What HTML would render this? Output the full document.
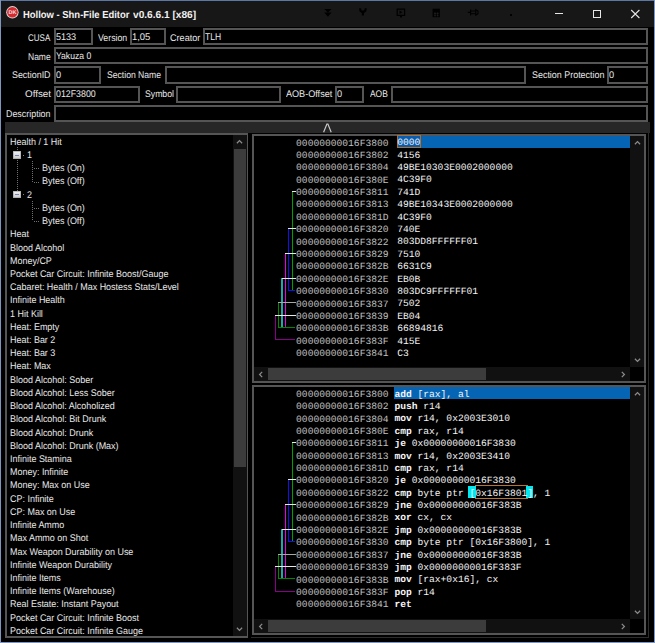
<!DOCTYPE html><html><head><meta charset="utf-8"><style>html,body{margin:0;padding:0;background:#000;text-rendering:geometricPrecision;width:655px;height:643px;overflow:hidden;position:relative}div{box-sizing:content-box}</style></head><body>
<div style="position:absolute;left:0px;top:0px;width:655.00px;height:1.00px;background:#5b77a6;"></div>
<div style="position:absolute;left:0px;top:0px;width:1.20px;height:643.00px;background:#7d96c0;"></div>
<div style="position:absolute;left:653.6px;top:0px;width:1.40px;height:643.00px;background:#7d96c0;"></div>
<div style="position:absolute;left:0px;top:641.6px;width:655.00px;height:1.40px;background:#7d96c0;"></div>
<div style="position:absolute;left:1.2px;top:1px;width:652.40px;height:25.70px;background:#171717;"></div>
<svg style="position:absolute;left:5px;top:5px" width="15" height="15" viewBox="0 0 15 15"><circle cx="7.4" cy="7.3" r="6.2" fill="#d8d8d8"/><circle cx="7.4" cy="7.3" r="5.3" fill="#d42a30"/><text x="7.4" y="9.4" font-family="Liberation Sans" font-size="5.5" font-weight="700" fill="#f4dede" text-anchor="middle">DK</text></svg>
<div style="position:absolute;left:22.91px;top:10.17px;font:700 10.2px/11.73px 'Liberation Sans', sans-serif;color:#f2f2f2;white-space:pre;transform:scaleX(0.9263);transform-origin:0 0;">Hollow - Shn-File Editor</div>
<div style="position:absolute;left:133.20px;top:10.17px;font:700 10.2px/11.73px 'Liberation Sans', sans-serif;color:#f2f2f2;white-space:pre;transform:scaleX(0.9952);transform-origin:0 0;">v0.6.6.1 [x86]</div>
<svg style="position:absolute;left:323px;top:8px" width="10" height="10" viewBox="0 0 10 10"><path d="M1.2 1 L8.6 1 L4.9 4.4 Z M1.2 4.6 L8.6 4.6 L4.9 8.8 Z" fill="#000"/></svg>
<svg style="position:absolute;left:358px;top:7px" width="10" height="10" viewBox="0 0 10 10"><path d="M1 1.2 L3 1.2 L3.6 3.4 L6.2 3.4 L6.8 1.2 L8.8 1.2 L8.2 4.6 L6 6 L6 8.6 L3.8 8.6 L3.8 6 L1.6 4.6 Z" fill="#000"/></svg>
<svg style="position:absolute;left:396px;top:7.5px" width="10" height="11" viewBox="0 0 10 11"><path d="M1.2 1.2 H8.6 V7.4 H1.2 Z" stroke="#000" stroke-width="1.2" fill="none"/><path d="M3.5 2.6 L6.4 4.3 L3.5 6 Z M4 8 H6 V9.6 H4 Z" fill="#000"/></svg>
<svg style="position:absolute;left:432px;top:7.5px" width="9" height="10" viewBox="0 0 9 10"><path d="M0.6 0.7 H7.9 V9.2 H0.6 Z" fill="#000"/><circle cx="3" cy="5.6" r="1.1" fill="#1c1c1c"/><circle cx="5.6" cy="5.6" r="1.1" fill="#1c1c1c"/><circle cx="3" cy="7.6" r="0.9" fill="#1c1c1c"/><circle cx="5.6" cy="7.6" r="0.9" fill="#1c1c1c"/></svg>
<svg style="position:absolute;left:467px;top:8px" width="12" height="9" viewBox="0 0 12 9"><path d="M0.8 4.4 H3.2 M3.6 1.4 V7.4 M3.6 3 H8.8 V5.8 H3.6 M8.8 1.6 L11 3 V5.8 L8.8 7.2 Z" stroke="#000" stroke-width="1.1" fill="none"/></svg>
<div style="position:absolute;left:510.2px;top:13.9px;width:1.80px;height:1.70px;background:#000;"></div>
<div style="position:absolute;left:554.8px;top:12.7px;width:8.60px;height:1.00px;background:#e6e6e6;"></div>
<div style="position:absolute;left:593.2px;top:9.5px;width:6.2px;height:6.1px;border:1px solid #e6e6e6"></div>
<svg style="position:absolute;left:630px;top:8.5px" width="11" height="10" viewBox="0 0 11 10"><path d="M1.2 1 L9.4 9 M9.4 1 L1.2 9" stroke="#e6e6e6" stroke-width="1.1"/></svg>
<div style="position:absolute;left:54px;top:28px;width:35.00px;height:13.20px;border:2px solid #555555;background:#000"></div>
<div style="position:absolute;left:130.3px;top:28px;width:31.70px;height:13.20px;border:2px solid #555555;background:#000"></div>
<div style="position:absolute;left:203.2px;top:28px;width:440.80px;height:13.20px;border:2px solid #555555;background:#000"></div>
<div style="position:absolute;left:54px;top:47.2px;width:590.00px;height:13.20px;border:2px solid #555555;background:#000"></div>
<div style="position:absolute;left:54px;top:66.4px;width:43.30px;height:13.20px;border:2px solid #555555;background:#000"></div>
<div style="position:absolute;left:164.6px;top:66.4px;width:357.40px;height:13.20px;border:2px solid #555555;background:#000"></div>
<div style="position:absolute;left:606.5px;top:66.4px;width:37.50px;height:13.20px;border:2px solid #555555;background:#000"></div>
<div style="position:absolute;left:54px;top:85.6px;width:82.00px;height:13.20px;border:2px solid #555555;background:#000"></div>
<div style="position:absolute;left:176.3px;top:85.6px;width:100.70px;height:13.20px;border:2px solid #555555;background:#000"></div>
<div style="position:absolute;left:335.3px;top:85.6px;width:24.70px;height:13.20px;border:2px solid #555555;background:#000"></div>
<div style="position:absolute;left:390.8px;top:85.6px;width:253.20px;height:13.20px;border:2px solid #555555;background:#000"></div>
<div style="position:absolute;left:54px;top:104.8px;width:590.00px;height:13.20px;border:2px solid #555555;background:#000"></div>
<div style="position:absolute;left:28.49px;top:32.52px;font:400 9.7px/11.15px 'Liberation Sans', sans-serif;color:#e8e8e8;white-space:pre;transform:scaleX(0.8264);transform-origin:0 0;">CUSA</div>
<div style="position:absolute;left:97.80px;top:32.52px;font:400 9.7px/11.15px 'Liberation Sans', sans-serif;color:#e8e8e8;white-space:pre;transform:scaleX(0.9039);transform-origin:0 0;">Version</div>
<div style="position:absolute;left:169.53px;top:32.52px;font:400 9.7px/11.15px 'Liberation Sans', sans-serif;color:#e8e8e8;white-space:pre;transform:scaleX(0.9386);transform-origin:0 0;">Creator</div>
<div style="position:absolute;left:28.14px;top:51.62px;font:400 9.7px/11.15px 'Liberation Sans', sans-serif;color:#e8e8e8;white-space:pre;transform:scaleX(0.8768);transform-origin:0 0;">Name</div>
<div style="position:absolute;left:12.34px;top:70.12px;font:400 9.7px/11.15px 'Liberation Sans', sans-serif;color:#e8e8e8;white-space:pre;transform:scaleX(0.9171);transform-origin:0 0;">SectionID</div>
<div style="position:absolute;left:107.16px;top:70.12px;font:400 9.7px/11.15px 'Liberation Sans', sans-serif;color:#e8e8e8;white-space:pre;transform:scaleX(0.8883);transform-origin:0 0;">Section Name</div>
<div style="position:absolute;left:531.54px;top:70.12px;font:400 9.7px/11.15px 'Liberation Sans', sans-serif;color:#e8e8e8;white-space:pre;transform:scaleX(0.9213);transform-origin:0 0;">Section Protection</div>
<div style="position:absolute;left:24.69px;top:89.42px;font:400 9.7px/11.15px 'Liberation Sans', sans-serif;color:#e8e8e8;white-space:pre;transform:scaleX(1.0139);transform-origin:0 0;">Offset</div>
<div style="position:absolute;left:144.55px;top:89.42px;font:400 9.7px/11.15px 'Liberation Sans', sans-serif;color:#e8e8e8;white-space:pre;transform:scaleX(0.8960);transform-origin:0 0;">Symbol</div>
<div style="position:absolute;left:286.40px;top:89.42px;font:400 9.7px/11.15px 'Liberation Sans', sans-serif;color:#e8e8e8;white-space:pre;transform:scaleX(0.9374);transform-origin:0 0;">AOB-Offset</div>
<div style="position:absolute;left:370.40px;top:89.42px;font:400 9.7px/11.15px 'Liberation Sans', sans-serif;color:#e8e8e8;white-space:pre;transform:scaleX(0.8700);transform-origin:0 0;">AOB</div>
<div style="position:absolute;left:6.31px;top:108.62px;font:400 9.7px/11.15px 'Liberation Sans', sans-serif;color:#e8e8e8;white-space:pre;transform:scaleX(0.9185);transform-origin:0 0;">Description</div>
<div style="position:absolute;left:56.07px;top:32.22px;font:400 9.7px/11.15px 'Liberation Sans', sans-serif;color:#e8e8e8;white-space:pre;transform:scaleX(0.9333);transform-origin:0 0;">5133</div>
<div style="position:absolute;left:132.17px;top:32.22px;font:400 9.7px/11.15px 'Liberation Sans', sans-serif;color:#e8e8e8;white-space:pre;transform:scaleX(0.9746);transform-origin:0 0;">1,05</div>
<div style="position:absolute;left:204.98px;top:32.22px;font:400 9.7px/11.15px 'Liberation Sans', sans-serif;color:#e8e8e8;white-space:pre;transform:scaleX(0.8812);transform-origin:0 0;">TLH</div>
<div style="position:absolute;left:55.78px;top:51.32px;font:400 9.7px/11.15px 'Liberation Sans', sans-serif;color:#e8e8e8;white-space:pre;transform:scaleX(0.8866);transform-origin:0 0;">Yakuza 0</div>
<div style="position:absolute;left:55.76px;top:69.82px;font:400 9.7px/11.15px 'Liberation Sans', sans-serif;color:#e8e8e8;white-space:pre;transform:scaleX(0.9474);transform-origin:0 0;">0</div>
<div style="position:absolute;left:55.77px;top:89.12px;font:400 9.7px/11.15px 'Liberation Sans', sans-serif;color:#e8e8e8;white-space:pre;transform:scaleX(0.9093);transform-origin:0 0;">012F3800</div>
<div style="position:absolute;left:608.50px;top:69.82px;font:400 9.7px/11.15px 'Liberation Sans', sans-serif;color:#e8e8e8;white-space:pre;transform:scaleX(0.9474);transform-origin:0 0;">0</div>
<div style="position:absolute;left:337.30px;top:89.12px;font:400 9.7px/11.15px 'Liberation Sans', sans-serif;color:#e8e8e8;white-space:pre;transform:scaleX(0.9474);transform-origin:0 0;">0</div>
<div style="position:absolute;left:5.1px;top:121.7px;width:645.20px;height:11.10px;background:#272727;"></div>
<svg style="position:absolute;left:322px;top:122.5px" width="11" height="10" viewBox="0 0 11 10"><path d="M1.6 9.3 L4.9 1 L5.9 1 L9.2 9.3" stroke="#c8c8c8" stroke-width="1.2" fill="none"/></svg>
<div style="position:absolute;left:5.1px;top:132.8px;width:239.40px;height:501.00px;border:2.1px solid #555555;background:#000"></div>
<div style="position:absolute;left:233.1px;top:134.9px;width:13.50px;height:501.00px;background:#111;"></div>
<div style="position:absolute;left:233.7px;top:149px;width:12.20px;height:317.70px;background:#3c3c3c;"></div>
<div style="position:absolute;left:10.10px;top:136.82px;font:400 9.7px/11.15px 'Liberation Sans', sans-serif;color:#e8e8e8;white-space:pre;transform:scaleX(0.9250);transform-origin:0 0;">Health / 1 Hit</div>
<div style="position:absolute;left:27.40px;top:150.04px;font:400 9.7px/11.15px 'Liberation Sans', sans-serif;color:#e8e8e8;white-space:pre;transform:scaleX(0.9250);transform-origin:0 0;">1</div>
<div style="position:absolute;left:41.60px;top:163.25px;font:400 9.7px/11.15px 'Liberation Sans', sans-serif;color:#e8e8e8;white-space:pre;transform:scaleX(0.9250);transform-origin:0 0;">Bytes (On)</div>
<div style="position:absolute;left:41.60px;top:176.47px;font:400 9.7px/11.15px 'Liberation Sans', sans-serif;color:#e8e8e8;white-space:pre;transform:scaleX(0.9250);transform-origin:0 0;">Bytes (Off)</div>
<div style="position:absolute;left:27.40px;top:189.69px;font:400 9.7px/11.15px 'Liberation Sans', sans-serif;color:#e8e8e8;white-space:pre;transform:scaleX(0.9250);transform-origin:0 0;">2</div>
<div style="position:absolute;left:41.60px;top:202.90px;font:400 9.7px/11.15px 'Liberation Sans', sans-serif;color:#e8e8e8;white-space:pre;transform:scaleX(0.9250);transform-origin:0 0;">Bytes (On)</div>
<div style="position:absolute;left:41.60px;top:216.12px;font:400 9.7px/11.15px 'Liberation Sans', sans-serif;color:#e8e8e8;white-space:pre;transform:scaleX(0.9250);transform-origin:0 0;">Bytes (Off)</div>
<div style="position:absolute;left:10.10px;top:229.33px;font:400 9.7px/11.15px 'Liberation Sans', sans-serif;color:#e8e8e8;white-space:pre;transform:scaleX(0.9250);transform-origin:0 0;">Heat</div>
<div style="position:absolute;left:10.10px;top:242.55px;font:400 9.7px/11.15px 'Liberation Sans', sans-serif;color:#e8e8e8;white-space:pre;transform:scaleX(0.9250);transform-origin:0 0;">Blood Alcohol</div>
<div style="position:absolute;left:10.10px;top:255.77px;font:400 9.7px/11.15px 'Liberation Sans', sans-serif;color:#e8e8e8;white-space:pre;transform:scaleX(0.9250);transform-origin:0 0;">Money/CP</div>
<div style="position:absolute;left:10.10px;top:268.98px;font:400 9.7px/11.15px 'Liberation Sans', sans-serif;color:#e8e8e8;white-space:pre;transform:scaleX(0.9250);transform-origin:0 0;">Pocket Car Circuit: Infinite Boost/Gauge</div>
<div style="position:absolute;left:10.10px;top:282.20px;font:400 9.7px/11.15px 'Liberation Sans', sans-serif;color:#e8e8e8;white-space:pre;transform:scaleX(0.9250);transform-origin:0 0;">Cabaret: Health / Max Hostess Stats/Level</div>
<div style="position:absolute;left:10.10px;top:295.41px;font:400 9.7px/11.15px 'Liberation Sans', sans-serif;color:#e8e8e8;white-space:pre;transform:scaleX(0.9250);transform-origin:0 0;">Infinite Health</div>
<div style="position:absolute;left:10.10px;top:308.63px;font:400 9.7px/11.15px 'Liberation Sans', sans-serif;color:#e8e8e8;white-space:pre;transform:scaleX(0.9250);transform-origin:0 0;">1 Hit Kill</div>
<div style="position:absolute;left:10.10px;top:321.85px;font:400 9.7px/11.15px 'Liberation Sans', sans-serif;color:#e8e8e8;white-space:pre;transform:scaleX(0.9250);transform-origin:0 0;">Heat: Empty</div>
<div style="position:absolute;left:10.10px;top:335.06px;font:400 9.7px/11.15px 'Liberation Sans', sans-serif;color:#e8e8e8;white-space:pre;transform:scaleX(0.9250);transform-origin:0 0;">Heat: Bar 2</div>
<div style="position:absolute;left:10.10px;top:348.28px;font:400 9.7px/11.15px 'Liberation Sans', sans-serif;color:#e8e8e8;white-space:pre;transform:scaleX(0.9250);transform-origin:0 0;">Heat: Bar 3</div>
<div style="position:absolute;left:10.10px;top:361.49px;font:400 9.7px/11.15px 'Liberation Sans', sans-serif;color:#e8e8e8;white-space:pre;transform:scaleX(0.9250);transform-origin:0 0;">Heat: Max</div>
<div style="position:absolute;left:10.10px;top:374.71px;font:400 9.7px/11.15px 'Liberation Sans', sans-serif;color:#e8e8e8;white-space:pre;transform:scaleX(0.9250);transform-origin:0 0;">Blood Alcohol: Sober</div>
<div style="position:absolute;left:10.10px;top:387.93px;font:400 9.7px/11.15px 'Liberation Sans', sans-serif;color:#e8e8e8;white-space:pre;transform:scaleX(0.9250);transform-origin:0 0;">Blood Alcohol: Less Sober</div>
<div style="position:absolute;left:10.10px;top:401.14px;font:400 9.7px/11.15px 'Liberation Sans', sans-serif;color:#e8e8e8;white-space:pre;transform:scaleX(0.9250);transform-origin:0 0;">Blood Alcohol: Alcoholized</div>
<div style="position:absolute;left:10.10px;top:414.36px;font:400 9.7px/11.15px 'Liberation Sans', sans-serif;color:#e8e8e8;white-space:pre;transform:scaleX(0.9250);transform-origin:0 0;">Blood Alcohol: Bit Drunk</div>
<div style="position:absolute;left:10.10px;top:427.57px;font:400 9.7px/11.15px 'Liberation Sans', sans-serif;color:#e8e8e8;white-space:pre;transform:scaleX(0.9250);transform-origin:0 0;">Blood Alcohol: Drunk</div>
<div style="position:absolute;left:10.10px;top:440.79px;font:400 9.7px/11.15px 'Liberation Sans', sans-serif;color:#e8e8e8;white-space:pre;transform:scaleX(0.9250);transform-origin:0 0;">Blood Alcohol: Drunk (Max)</div>
<div style="position:absolute;left:10.10px;top:454.01px;font:400 9.7px/11.15px 'Liberation Sans', sans-serif;color:#e8e8e8;white-space:pre;transform:scaleX(0.9250);transform-origin:0 0;">Infinite Stamina</div>
<div style="position:absolute;left:10.10px;top:467.22px;font:400 9.7px/11.15px 'Liberation Sans', sans-serif;color:#e8e8e8;white-space:pre;transform:scaleX(0.9250);transform-origin:0 0;">Money: Infinite</div>
<div style="position:absolute;left:10.10px;top:480.44px;font:400 9.7px/11.15px 'Liberation Sans', sans-serif;color:#e8e8e8;white-space:pre;transform:scaleX(0.9250);transform-origin:0 0;">Money: Max on Use</div>
<div style="position:absolute;left:10.10px;top:493.65px;font:400 9.7px/11.15px 'Liberation Sans', sans-serif;color:#e8e8e8;white-space:pre;transform:scaleX(0.9250);transform-origin:0 0;">CP: Infinite</div>
<div style="position:absolute;left:10.10px;top:506.87px;font:400 9.7px/11.15px 'Liberation Sans', sans-serif;color:#e8e8e8;white-space:pre;transform:scaleX(0.9250);transform-origin:0 0;">CP: Max on Use</div>
<div style="position:absolute;left:10.10px;top:520.09px;font:400 9.7px/11.15px 'Liberation Sans', sans-serif;color:#e8e8e8;white-space:pre;transform:scaleX(0.9250);transform-origin:0 0;">Infinite Ammo</div>
<div style="position:absolute;left:10.10px;top:533.30px;font:400 9.7px/11.15px 'Liberation Sans', sans-serif;color:#e8e8e8;white-space:pre;transform:scaleX(0.9250);transform-origin:0 0;">Max Ammo on Shot</div>
<div style="position:absolute;left:10.10px;top:546.52px;font:400 9.7px/11.15px 'Liberation Sans', sans-serif;color:#e8e8e8;white-space:pre;transform:scaleX(0.9250);transform-origin:0 0;">Max Weapon Durability on Use</div>
<div style="position:absolute;left:10.10px;top:559.73px;font:400 9.7px/11.15px 'Liberation Sans', sans-serif;color:#e8e8e8;white-space:pre;transform:scaleX(0.9250);transform-origin:0 0;">Infinite Weapon Durability</div>
<div style="position:absolute;left:10.10px;top:572.95px;font:400 9.7px/11.15px 'Liberation Sans', sans-serif;color:#e8e8e8;white-space:pre;transform:scaleX(0.9250);transform-origin:0 0;">Infinite Items</div>
<div style="position:absolute;left:10.10px;top:586.17px;font:400 9.7px/11.15px 'Liberation Sans', sans-serif;color:#e8e8e8;white-space:pre;transform:scaleX(0.9250);transform-origin:0 0;">Infinite Items (Warehouse)</div>
<div style="position:absolute;left:10.10px;top:599.38px;font:400 9.7px/11.15px 'Liberation Sans', sans-serif;color:#e8e8e8;white-space:pre;transform:scaleX(0.9250);transform-origin:0 0;">Real Estate: Instant Payout</div>
<div style="position:absolute;left:10.10px;top:612.60px;font:400 9.7px/11.15px 'Liberation Sans', sans-serif;color:#e8e8e8;white-space:pre;transform:scaleX(0.9250);transform-origin:0 0;">Pocket Car Circuit: Infinite Boost</div>
<div style="position:absolute;left:10.10px;top:625.81px;font:400 9.7px/11.15px 'Liberation Sans', sans-serif;color:#e8e8e8;white-space:pre;transform:scaleX(0.9250);transform-origin:0 0;">Pocket Car Circuit: Infinite Gauge</div>
<div style="position:absolute;left:17px;top:146px;width:1px;height:5.2px;background:repeating-linear-gradient(#000 0 1px,#707070 1px 2px)"></div>
<div style="position:absolute;left:17px;top:159.2px;width:1px;height:31.4px;background:repeating-linear-gradient(#000 0 1px,#707070 1px 2px)"></div>
<div style="position:absolute;left:22.5px;top:154.7px;width:1.00px;height:1.00px;background:#808080;"></div>
<div style="position:absolute;left:22.5px;top:194.1px;width:1.00px;height:1.00px;background:#808080;"></div>
<div style="position:absolute;left:32px;top:160.2px;width:1px;height:21.9px;background:repeating-linear-gradient(#000 0 1px,#707070 1px 2px)"></div>
<div style="position:absolute;left:34px;top:168.416px;width:6.0px;height:1px;background:repeating-linear-gradient(90deg,#707070 0 1px,#000 1px 2px)"></div>
<div style="position:absolute;left:34px;top:181.63199999999998px;width:6.0px;height:1px;background:repeating-linear-gradient(90deg,#707070 0 1px,#000 1px 2px)"></div>
<div style="position:absolute;left:32px;top:199.6px;width:1px;height:21.9px;background:repeating-linear-gradient(#000 0 1px,#707070 1px 2px)"></div>
<div style="position:absolute;left:34px;top:207.816px;width:6.0px;height:1px;background:repeating-linear-gradient(90deg,#707070 0 1px,#000 1px 2px)"></div>
<div style="position:absolute;left:34px;top:221.03199999999998px;width:6.0px;height:1px;background:repeating-linear-gradient(90deg,#707070 0 1px,#000 1px 2px)"></div>
<div style="position:absolute;left:13.10px;top:151.30px;width:7.8px;height:7.8px;background:linear-gradient(#f4f4f4,#c8c8c8);box-shadow:inset 0 0 0 0.7px #a8a8a8"></div>
<div style="position:absolute;left:14.7px;top:154.5px;width:4.60px;height:1.40px;background:#7484c0;"></div>
<div style="position:absolute;left:13.10px;top:190.70px;width:7.8px;height:7.8px;background:linear-gradient(#f4f4f4,#c8c8c8);box-shadow:inset 0 0 0 0.7px #a8a8a8"></div>
<div style="position:absolute;left:14.7px;top:193.9px;width:4.60px;height:1.40px;background:#7484c0;"></div>
<div style="position:absolute;left:648.1px;top:133px;width:1.20px;height:505.10px;background:#2c2c2c;"></div>
<div style="position:absolute;left:250.9px;top:637px;width:398.40px;height:1.10px;background:#2c2c2c;"></div>
<svg style="position:absolute;left:236.40px;top:139.00px" width="7" height="6" viewBox="0 0 7 6"><path d="M0.9 4.2 L3.5 1.6 L6.1 4.2" stroke="#8c8c8c" stroke-width="1.25" fill="none"/></svg>
<svg style="position:absolute;left:236.40px;top:626.00px" width="7" height="6" viewBox="0 0 7 6"><path d="M0.9 1.8 L3.5 4.4 L6.1 1.8" stroke="#8c8c8c" stroke-width="1.25" fill="none"/></svg>
<div style="position:absolute;left:251.9px;top:134px;width:389.90px;height:244.70px;border:2.1px solid #555555;background:#000"></div>
<div style="position:absolute;left:630.3px;top:136.1px;width:13.60px;height:231.20px;background:#111;"></div>
<svg style="position:absolute;left:633.50px;top:140.30px" width="7" height="6" viewBox="0 0 7 6"><path d="M0.9 4.2 L3.5 1.6 L6.1 4.2" stroke="#8c8c8c" stroke-width="1.25" fill="none"/></svg>
<svg style="position:absolute;left:633.50px;top:357.30px" width="7" height="6" viewBox="0 0 7 6"><path d="M0.9 1.8 L3.5 4.4 L6.1 1.8" stroke="#8c8c8c" stroke-width="1.25" fill="none"/></svg>
<div style="position:absolute;left:254px;top:367.29999999999995px;width:376.30px;height:13.50px;background:#111;"></div>
<div style="position:absolute;left:267.6px;top:367.9px;width:218.40px;height:12.40px;background:#3c3c3c;"></div>
<svg style="position:absolute;left:257.60px;top:370.50px" width="6" height="7" viewBox="0 0 6 7"><path d="M4.2 0.9 L1.6 3.5 L4.2 6.1" stroke="#8c8c8c" stroke-width="1.25" fill="none"/></svg>
<svg style="position:absolute;left:619.80px;top:370.50px" width="6" height="7" viewBox="0 0 6 7"><path d="M1.8 0.9 L4.4 3.5 L1.8 6.1" stroke="#8c8c8c" stroke-width="1.25" fill="none"/></svg>
<div style="position:absolute;left:420.9px;top:135.70000000000002px;width:209.40px;height:12.20px;background:#0564b4;"></div>
<div style="position:absolute;left:396.5px;top:135.30px;width:22.2px;height:10.7px;border:1.2px solid #b0702c;background:#0a5cae"></div>
<div style="position:absolute;left:296.10px;top:137.51px;font:400 9.65px/11.10px 'Liberation Mono', monospace;color:#c0c0c0;white-space:pre;">00000000016F3800</div>
<div style="position:absolute;left:397.20px;top:137.31px;font:400 9.65px/11.10px 'Liberation Mono', monospace;color:#f4f4f4;white-space:pre;">0000</div>
<div style="position:absolute;left:296.10px;top:149.90px;font:400 9.65px/11.10px 'Liberation Mono', monospace;color:#c0c0c0;white-space:pre;">00000000016F3802</div>
<div style="position:absolute;left:397.20px;top:149.70px;font:400 9.65px/11.10px 'Liberation Mono', monospace;color:#f4f4f4;white-space:pre;">4156</div>
<div style="position:absolute;left:296.10px;top:162.29px;font:400 9.65px/11.10px 'Liberation Mono', monospace;color:#c0c0c0;white-space:pre;">00000000016F3804</div>
<div style="position:absolute;left:397.20px;top:162.09px;font:400 9.65px/11.10px 'Liberation Mono', monospace;color:#f4f4f4;white-space:pre;">49BE10303E0002000000</div>
<div style="position:absolute;left:296.10px;top:174.68px;font:400 9.65px/11.10px 'Liberation Mono', monospace;color:#c0c0c0;white-space:pre;">00000000016F380E</div>
<div style="position:absolute;left:397.20px;top:174.48px;font:400 9.65px/11.10px 'Liberation Mono', monospace;color:#f4f4f4;white-space:pre;">4C39F0</div>
<div style="position:absolute;left:296.10px;top:187.07px;font:400 9.65px/11.10px 'Liberation Mono', monospace;color:#c0c0c0;white-space:pre;">00000000016F3811</div>
<div style="position:absolute;left:397.20px;top:186.87px;font:400 9.65px/11.10px 'Liberation Mono', monospace;color:#f4f4f4;white-space:pre;">741D</div>
<div style="position:absolute;left:296.10px;top:199.46px;font:400 9.65px/11.10px 'Liberation Mono', monospace;color:#c0c0c0;white-space:pre;">00000000016F3813</div>
<div style="position:absolute;left:397.20px;top:199.26px;font:400 9.65px/11.10px 'Liberation Mono', monospace;color:#f4f4f4;white-space:pre;">49BE10343E0002000000</div>
<div style="position:absolute;left:296.10px;top:211.85px;font:400 9.65px/11.10px 'Liberation Mono', monospace;color:#c0c0c0;white-space:pre;">00000000016F381D</div>
<div style="position:absolute;left:397.20px;top:211.65px;font:400 9.65px/11.10px 'Liberation Mono', monospace;color:#f4f4f4;white-space:pre;">4C39F0</div>
<div style="position:absolute;left:296.10px;top:224.24px;font:400 9.65px/11.10px 'Liberation Mono', monospace;color:#c0c0c0;white-space:pre;">00000000016F3820</div>
<div style="position:absolute;left:397.20px;top:224.04px;font:400 9.65px/11.10px 'Liberation Mono', monospace;color:#f4f4f4;white-space:pre;">740E</div>
<div style="position:absolute;left:296.10px;top:236.63px;font:400 9.65px/11.10px 'Liberation Mono', monospace;color:#c0c0c0;white-space:pre;">00000000016F3822</div>
<div style="position:absolute;left:397.20px;top:236.43px;font:400 9.65px/11.10px 'Liberation Mono', monospace;color:#f4f4f4;white-space:pre;">803DD8FFFFFF01</div>
<div style="position:absolute;left:296.10px;top:249.02px;font:400 9.65px/11.10px 'Liberation Mono', monospace;color:#c0c0c0;white-space:pre;">00000000016F3829</div>
<div style="position:absolute;left:397.20px;top:248.82px;font:400 9.65px/11.10px 'Liberation Mono', monospace;color:#f4f4f4;white-space:pre;">7510</div>
<div style="position:absolute;left:296.10px;top:261.41px;font:400 9.65px/11.10px 'Liberation Mono', monospace;color:#c0c0c0;white-space:pre;">00000000016F382B</div>
<div style="position:absolute;left:397.20px;top:261.21px;font:400 9.65px/11.10px 'Liberation Mono', monospace;color:#f4f4f4;white-space:pre;">6631C9</div>
<div style="position:absolute;left:296.10px;top:273.80px;font:400 9.65px/11.10px 'Liberation Mono', monospace;color:#c0c0c0;white-space:pre;">00000000016F382E</div>
<div style="position:absolute;left:397.20px;top:273.60px;font:400 9.65px/11.10px 'Liberation Mono', monospace;color:#f4f4f4;white-space:pre;">EB0B</div>
<div style="position:absolute;left:296.10px;top:286.19px;font:400 9.65px/11.10px 'Liberation Mono', monospace;color:#c0c0c0;white-space:pre;">00000000016F3830</div>
<div style="position:absolute;left:397.20px;top:285.99px;font:400 9.65px/11.10px 'Liberation Mono', monospace;color:#f4f4f4;white-space:pre;">803DC9FFFFFF01</div>
<div style="position:absolute;left:296.10px;top:298.58px;font:400 9.65px/11.10px 'Liberation Mono', monospace;color:#c0c0c0;white-space:pre;">00000000016F3837</div>
<div style="position:absolute;left:397.20px;top:298.38px;font:400 9.65px/11.10px 'Liberation Mono', monospace;color:#f4f4f4;white-space:pre;">7502</div>
<div style="position:absolute;left:296.10px;top:310.97px;font:400 9.65px/11.10px 'Liberation Mono', monospace;color:#c0c0c0;white-space:pre;">00000000016F3839</div>
<div style="position:absolute;left:397.20px;top:310.77px;font:400 9.65px/11.10px 'Liberation Mono', monospace;color:#f4f4f4;white-space:pre;">EB04</div>
<div style="position:absolute;left:296.10px;top:323.36px;font:400 9.65px/11.10px 'Liberation Mono', monospace;color:#c0c0c0;white-space:pre;">00000000016F383B</div>
<div style="position:absolute;left:397.20px;top:323.16px;font:400 9.65px/11.10px 'Liberation Mono', monospace;color:#f4f4f4;white-space:pre;">66894816</div>
<div style="position:absolute;left:296.10px;top:335.75px;font:400 9.65px/11.10px 'Liberation Mono', monospace;color:#c0c0c0;white-space:pre;">00000000016F383F</div>
<div style="position:absolute;left:397.20px;top:335.55px;font:400 9.65px/11.10px 'Liberation Mono', monospace;color:#f4f4f4;white-space:pre;">415E</div>
<div style="position:absolute;left:296.10px;top:348.14px;font:400 9.65px/11.10px 'Liberation Mono', monospace;color:#c0c0c0;white-space:pre;">00000000016F3841</div>
<div style="position:absolute;left:397.20px;top:347.94px;font:400 9.65px/11.10px 'Liberation Mono', monospace;color:#f4f4f4;white-space:pre;">C3</div>
<div style="position:absolute;left:291.5px;top:191px;width:1.20px;height:100.10px;background:#00a000;"></div>
<div style="position:absolute;left:288.2px;top:228px;width:1.20px;height:63.10px;background:#1010f0;"></div>
<div style="position:absolute;left:284.79999999999995px;top:253px;width:1.20px;height:75.10px;background:#e800e8;"></div>
<div style="position:absolute;left:281.15000000000003px;top:278px;width:1.90px;height:50.10px;background:#20a8a8;"></div>
<div style="position:absolute;left:278.0px;top:302px;width:1.20px;height:26.10px;background:#008800;"></div>
<div style="position:absolute;left:274.9px;top:315px;width:1.20px;height:25.10px;background:#8a008a;"></div>
<div style="position:absolute;left:288.2px;top:290.0px;width:6.60px;height:1.10px;background:#1010f0;"></div>
<div style="position:absolute;left:278.0px;top:327.0px;width:16.80px;height:1.10px;background:#008800;"></div>
<div style="position:absolute;left:274.9px;top:339.0px;width:19.90px;height:1.10px;background:#8a008a;"></div>
<div style="position:absolute;left:291.5px;top:191.0px;width:4.40px;height:1.00px;background:#e8e8e8;"></div>
<div style="position:absolute;left:288.2px;top:228.0px;width:7.70px;height:1.00px;background:#e8e8e8;"></div>
<div style="position:absolute;left:284.79999999999995px;top:253.0px;width:11.10px;height:1.00px;background:#e8e8e8;"></div>
<div style="position:absolute;left:281.5px;top:278.0px;width:14.40px;height:1.00px;background:#e8e8e8;"></div>
<div style="position:absolute;left:278.0px;top:302.0px;width:17.90px;height:1.00px;background:#a8a8a8;"></div>
<div style="position:absolute;left:274.9px;top:315.0px;width:21.00px;height:1.00px;background:#e8e8e8;"></div>
<div style="position:absolute;left:251.9px;top:385.1px;width:389.90px;height:245.60px;border:2.1px solid #555555;background:#000"></div>
<div style="position:absolute;left:630.3px;top:387.20000000000005px;width:13.60px;height:232.10px;background:#111;"></div>
<svg style="position:absolute;left:633.50px;top:391.40px" width="7" height="6" viewBox="0 0 7 6"><path d="M0.9 4.2 L3.5 1.6 L6.1 4.2" stroke="#8c8c8c" stroke-width="1.25" fill="none"/></svg>
<svg style="position:absolute;left:633.50px;top:609.30px" width="7" height="6" viewBox="0 0 7 6"><path d="M0.9 1.8 L3.5 4.4 L6.1 1.8" stroke="#8c8c8c" stroke-width="1.25" fill="none"/></svg>
<div style="position:absolute;left:254px;top:619.3px;width:376.30px;height:13.50px;background:#111;"></div>
<div style="position:absolute;left:267.6px;top:619.9px;width:218.40px;height:12.40px;background:#3c3c3c;"></div>
<svg style="position:absolute;left:257.60px;top:622.50px" width="6" height="7" viewBox="0 0 6 7"><path d="M4.2 0.9 L1.6 3.5 L4.2 6.1" stroke="#8c8c8c" stroke-width="1.25" fill="none"/></svg>
<svg style="position:absolute;left:619.80px;top:622.50px" width="6" height="7" viewBox="0 0 6 7"><path d="M1.8 0.9 L4.4 3.5 L1.8 6.1" stroke="#8c8c8c" stroke-width="1.25" fill="none"/></svg>
<div style="position:absolute;left:393.9px;top:386.90000000000003px;width:236.40px;height:12.30px;background:#0564b4;"></div>
<div style="position:absolute;left:296.10px;top:388.76px;font:400 9.65px/11.10px 'Liberation Mono', monospace;color:#c0c0c0;white-space:pre;">00000000016F3800</div>
<div style="position:absolute;left:394.4px;top:388.56px;font:400 9.65px/11px 'Liberation Mono', monospace;color:#f4f4f4;white-space:pre"><b>add</b> [rax], al</div>
<div style="position:absolute;left:296.10px;top:401.15px;font:400 9.65px/11.10px 'Liberation Mono', monospace;color:#c0c0c0;white-space:pre;">00000000016F3802</div>
<div style="position:absolute;left:394.4px;top:400.95px;font:400 9.65px/11px 'Liberation Mono', monospace;color:#f4f4f4;white-space:pre"><b>push</b> r14</div>
<div style="position:absolute;left:296.10px;top:413.54px;font:400 9.65px/11.10px 'Liberation Mono', monospace;color:#c0c0c0;white-space:pre;">00000000016F3804</div>
<div style="position:absolute;left:394.4px;top:413.34px;font:400 9.65px/11px 'Liberation Mono', monospace;color:#f4f4f4;white-space:pre"><b>mov</b> r14, 0x2003E3010</div>
<div style="position:absolute;left:296.10px;top:425.93px;font:400 9.65px/11.10px 'Liberation Mono', monospace;color:#c0c0c0;white-space:pre;">00000000016F380E</div>
<div style="position:absolute;left:394.4px;top:425.73px;font:400 9.65px/11px 'Liberation Mono', monospace;color:#f4f4f4;white-space:pre"><b>cmp</b> rax, r14</div>
<div style="position:absolute;left:296.10px;top:438.32px;font:400 9.65px/11.10px 'Liberation Mono', monospace;color:#c0c0c0;white-space:pre;">00000000016F3811</div>
<div style="position:absolute;left:394.4px;top:438.12px;font:400 9.65px/11px 'Liberation Mono', monospace;color:#f4f4f4;white-space:pre"><b>je</b> 0x00000000016F3830</div>
<div style="position:absolute;left:296.10px;top:450.71px;font:400 9.65px/11.10px 'Liberation Mono', monospace;color:#c0c0c0;white-space:pre;">00000000016F3813</div>
<div style="position:absolute;left:394.4px;top:450.51px;font:400 9.65px/11px 'Liberation Mono', monospace;color:#f4f4f4;white-space:pre"><b>mov</b> r14, 0x2003E3410</div>
<div style="position:absolute;left:296.10px;top:463.10px;font:400 9.65px/11.10px 'Liberation Mono', monospace;color:#c0c0c0;white-space:pre;">00000000016F381D</div>
<div style="position:absolute;left:394.4px;top:462.90px;font:400 9.65px/11px 'Liberation Mono', monospace;color:#f4f4f4;white-space:pre"><b>cmp</b> rax, r14</div>
<div style="position:absolute;left:296.10px;top:475.49px;font:400 9.65px/11.10px 'Liberation Mono', monospace;color:#c0c0c0;white-space:pre;">00000000016F3820</div>
<div style="position:absolute;left:394.4px;top:475.29px;font:400 9.65px/11px 'Liberation Mono', monospace;color:#f4f4f4;white-space:pre"><b>je</b> 0x00000000016F3830</div>
<div style="position:absolute;left:296.10px;top:487.88px;font:400 9.65px/11.10px 'Liberation Mono', monospace;color:#c0c0c0;white-space:pre;">00000000016F3822</div>
<div style="position:absolute;left:475.3px;top:485.27px;width:50.4px;height:11.6px;border:1.3px solid #b8732e"></div>
<div style="position:absolute;left:468.4px;top:485.97px;width:7.60px;height:12.40px;background:#00e8f0;"></div>
<div style="position:absolute;left:526.3px;top:485.97px;width:7.10px;height:12.40px;background:#00e8f0;"></div>
<div style="position:absolute;left:394.4px;top:487.68px;font:400 9.65px/11px 'Liberation Mono', monospace;color:#f4f4f4;white-space:pre"><b>cmp</b> byte ptr [0x16F3801], 1</div>
<div style="position:absolute;left:296.10px;top:500.27px;font:400 9.65px/11.10px 'Liberation Mono', monospace;color:#c0c0c0;white-space:pre;">00000000016F3829</div>
<div style="position:absolute;left:394.4px;top:500.07px;font:400 9.65px/11px 'Liberation Mono', monospace;color:#f4f4f4;white-space:pre"><b>jne</b> 0x00000000016F383B</div>
<div style="position:absolute;left:296.10px;top:512.66px;font:400 9.65px/11.10px 'Liberation Mono', monospace;color:#c0c0c0;white-space:pre;">00000000016F382B</div>
<div style="position:absolute;left:394.4px;top:512.46px;font:400 9.65px/11px 'Liberation Mono', monospace;color:#f4f4f4;white-space:pre"><b>xor</b> cx, cx</div>
<div style="position:absolute;left:296.10px;top:525.05px;font:400 9.65px/11.10px 'Liberation Mono', monospace;color:#c0c0c0;white-space:pre;">00000000016F382E</div>
<div style="position:absolute;left:394.4px;top:524.85px;font:400 9.65px/11px 'Liberation Mono', monospace;color:#f4f4f4;white-space:pre"><b>jmp</b> 0x00000000016F383B</div>
<div style="position:absolute;left:296.10px;top:537.44px;font:400 9.65px/11.10px 'Liberation Mono', monospace;color:#c0c0c0;white-space:pre;">00000000016F3830</div>
<div style="position:absolute;left:394.4px;top:537.24px;font:400 9.65px/11px 'Liberation Mono', monospace;color:#f4f4f4;white-space:pre"><b>cmp</b> byte ptr [0x16F3800], 1</div>
<div style="position:absolute;left:296.10px;top:549.83px;font:400 9.65px/11.10px 'Liberation Mono', monospace;color:#c0c0c0;white-space:pre;">00000000016F3837</div>
<div style="position:absolute;left:394.4px;top:549.63px;font:400 9.65px/11px 'Liberation Mono', monospace;color:#f4f4f4;white-space:pre"><b>jne</b> 0x00000000016F383B</div>
<div style="position:absolute;left:296.10px;top:562.22px;font:400 9.65px/11.10px 'Liberation Mono', monospace;color:#c0c0c0;white-space:pre;">00000000016F3839</div>
<div style="position:absolute;left:394.4px;top:562.02px;font:400 9.65px/11px 'Liberation Mono', monospace;color:#f4f4f4;white-space:pre"><b>jmp</b> 0x00000000016F383F</div>
<div style="position:absolute;left:296.10px;top:574.61px;font:400 9.65px/11.10px 'Liberation Mono', monospace;color:#c0c0c0;white-space:pre;">00000000016F383B</div>
<div style="position:absolute;left:394.4px;top:574.41px;font:400 9.65px/11px 'Liberation Mono', monospace;color:#f4f4f4;white-space:pre"><b>mov</b> [rax+0x16], cx</div>
<div style="position:absolute;left:296.10px;top:587.00px;font:400 9.65px/11.10px 'Liberation Mono', monospace;color:#c0c0c0;white-space:pre;">00000000016F383F</div>
<div style="position:absolute;left:394.4px;top:586.80px;font:400 9.65px/11px 'Liberation Mono', monospace;color:#f4f4f4;white-space:pre"><b>pop</b> r14</div>
<div style="position:absolute;left:296.10px;top:599.39px;font:400 9.65px/11.10px 'Liberation Mono', monospace;color:#c0c0c0;white-space:pre;">00000000016F3841</div>
<div style="position:absolute;left:394.4px;top:599.19px;font:400 9.65px/11px 'Liberation Mono', monospace;color:#f4f4f4;white-space:pre"><b>ret</b> </div>
<div style="position:absolute;left:291.5px;top:442px;width:1.20px;height:100.10px;background:#00a000;"></div>
<div style="position:absolute;left:288.2px;top:479px;width:1.20px;height:63.10px;background:#1010f0;"></div>
<div style="position:absolute;left:284.79999999999995px;top:504px;width:1.20px;height:75.10px;background:#e800e8;"></div>
<div style="position:absolute;left:281.15000000000003px;top:529px;width:1.90px;height:50.10px;background:#20a8a8;"></div>
<div style="position:absolute;left:278.0px;top:554px;width:1.20px;height:25.10px;background:#008800;"></div>
<div style="position:absolute;left:274.9px;top:566px;width:1.20px;height:26.10px;background:#8a008a;"></div>
<div style="position:absolute;left:288.2px;top:541.0px;width:6.60px;height:1.10px;background:#1010f0;"></div>
<div style="position:absolute;left:278.0px;top:578.0px;width:16.80px;height:1.10px;background:#008800;"></div>
<div style="position:absolute;left:274.9px;top:591.0px;width:19.90px;height:1.10px;background:#8a008a;"></div>
<div style="position:absolute;left:291.5px;top:442.0px;width:4.40px;height:1.00px;background:#e8e8e8;"></div>
<div style="position:absolute;left:288.2px;top:479.0px;width:7.70px;height:1.00px;background:#e8e8e8;"></div>
<div style="position:absolute;left:284.79999999999995px;top:504.0px;width:11.10px;height:1.00px;background:#e8e8e8;"></div>
<div style="position:absolute;left:281.5px;top:529.0px;width:14.40px;height:1.00px;background:#e8e8e8;"></div>
<div style="position:absolute;left:278.0px;top:554.0px;width:17.90px;height:1.00px;background:#a8a8a8;"></div>
<div style="position:absolute;left:274.9px;top:566.0px;width:21.00px;height:1.00px;background:#e8e8e8;"></div>
</body></html>
